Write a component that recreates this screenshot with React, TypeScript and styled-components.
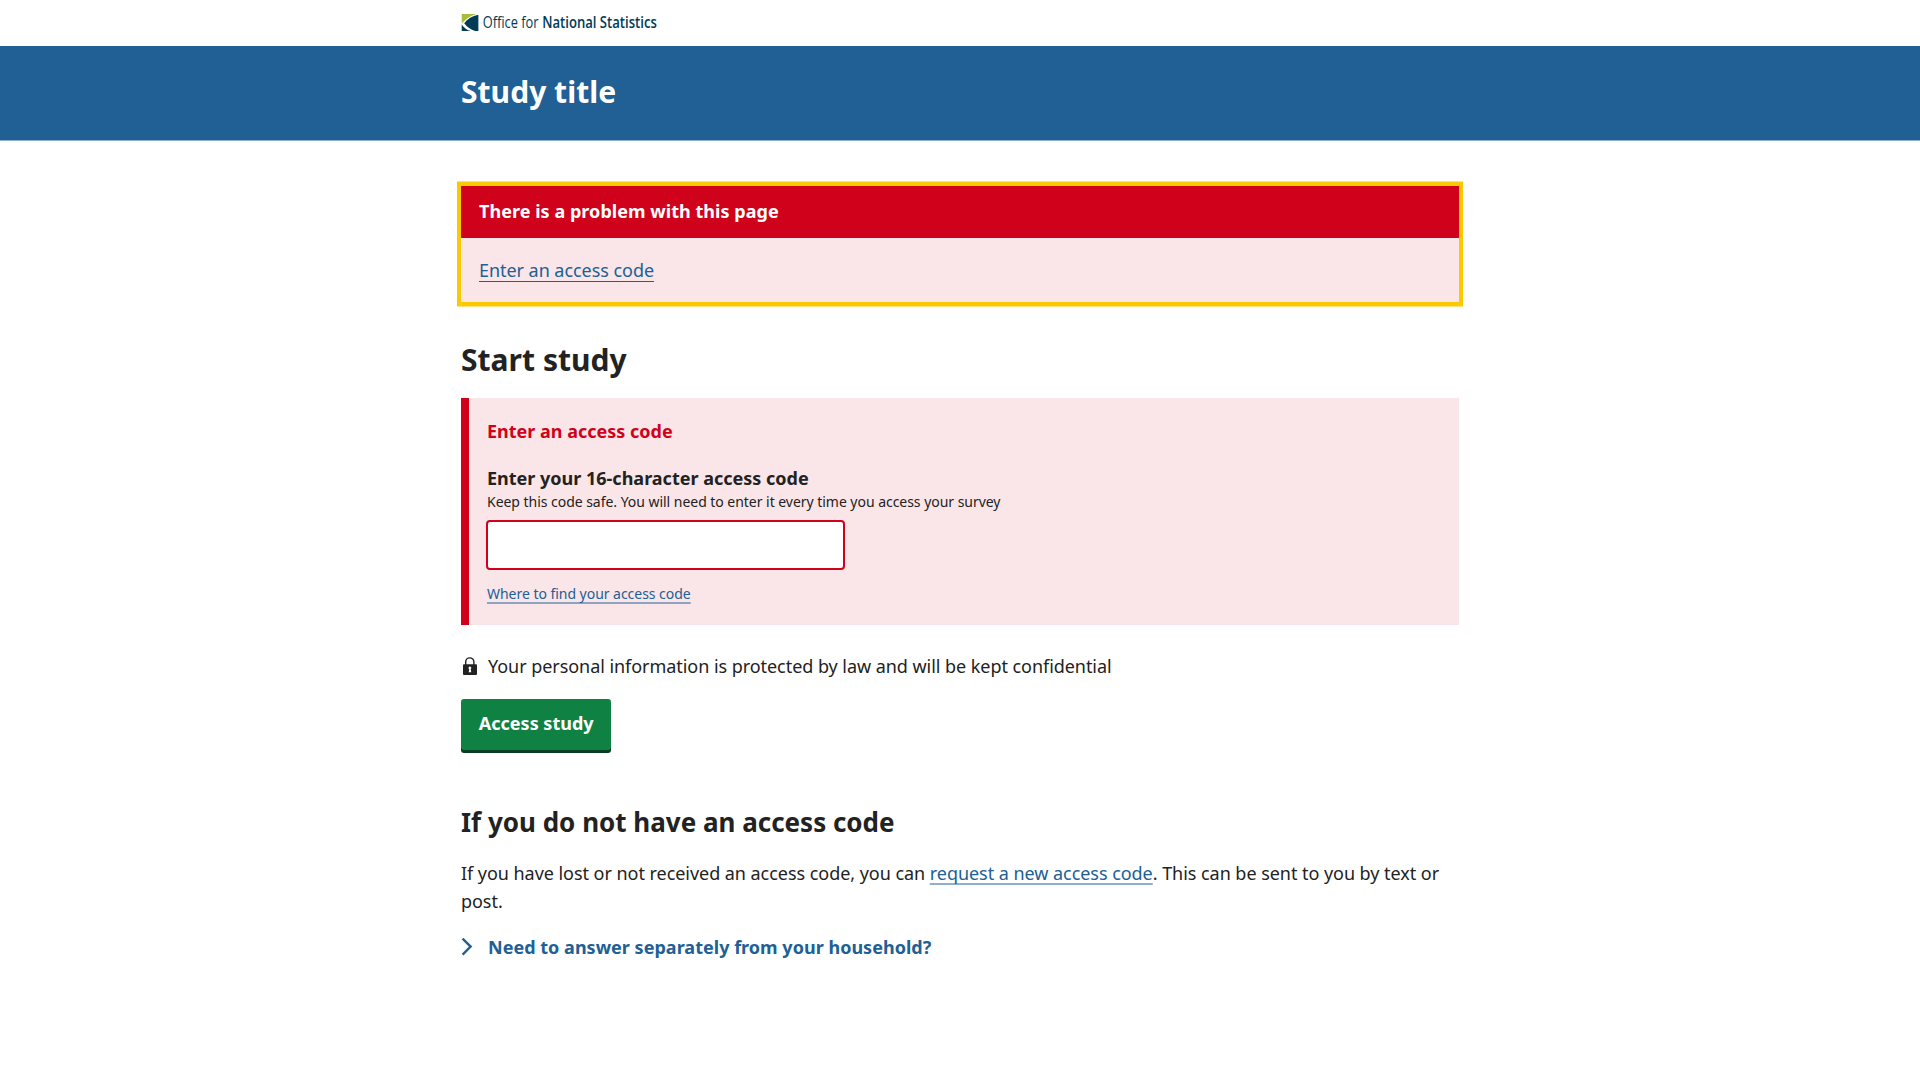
import React from "react";
import styled, { createGlobalStyle } from "styled-components";

const GlobalStyle = createGlobalStyle`
  *, *::before, *::after { box-sizing: border-box; }
  body {
    margin: 0;
    background: #fff;
    color: #222;
    font-family: "Noto Sans", "Open Sans", sans-serif;
    font-size: 18px;
    line-height: 28.8px;
  }
  h1, h2, p { margin: 0; }
`;

const Container = styled.div`
  width: 998px;
  margin: 0 auto 0 461px;
`;

const BrandBar = styled.header`
  height: 46px;
  padding-top: 8px;
`;

const Logo = styled.svg`
  display: block;
`;

const Masthead = styled.div`
  height: 94px;
  padding-top: 26.4px;
  background: #206095;
  box-shadow: 0 1px 0 rgba(32, 96, 149, 0.5);
`;

const Title = styled.h1<{ $light?: boolean }>`
  font-size: 30px;
  line-height: 39px;
  font-weight: 700;
  letter-spacing: 0.03px;
  color: ${(p) => (p.$light ? "#fff" : "#222")};
`;

const Summary = styled.section`
  margin-top: 46px;
  box-shadow:
    0 0 0 4px #fbc900,
    0 -1px 0 4px rgba(251, 201, 0, 0.5),
    0 1px 0 4px rgba(251, 201, 0, 0.5);
  background: #fae6e8;
`;

const SummaryHeader = styled.div`
  padding: 11.2px 18px 12px;
  background: #d0021b;
  color: #fff;
  font-weight: 700;
  letter-spacing: 0.04px;
`;

const SummaryBody = styled.div`
  padding: 18px 18px 17.2px;
  letter-spacing: -0.05px;
`;

const Link = styled.a<{ $soft?: boolean }>`
  color: #206095;
  text-decoration: underline;
  text-decoration-color: ${(p) => (p.$soft ? "rgba(32, 96, 149, 0.5)" : "#206095")};
  text-decoration-thickness: ${(p) => (p.$soft ? "2px" : "1px")};
  text-decoration-skip-ink: none;
  text-underline-offset: ${(p) => (p.$soft ? "3px" : "4px")};
`;

const Start = styled.div`
  margin-top: 37.6px;
`;

const ErrorPanel = styled.section`
  margin-top: 19.4px;
  height: 227px;
  padding: 19.3px 18px 18px;
  border-left: 8px solid #d0021b;
  background: #fae6e8;
`;

const ErrorText = styled.p`
  margin-bottom: 20px;
  color: #d0021b;
  font-weight: 700;
`;

const Label = styled.label`
  display: block;
  font-weight: 700;
  line-height: 25.2px;
`;

const Hint = styled.p`
  font-size: 14px;
  line-height: 22.4px;
  letter-spacing: -0.035px;
`;

const CodeInput = styled.input`
  display: block;
  width: 359px;
  height: 49.4px;
  margin: 6.7px 0 13.4px -1px;
  border: 2px solid #d0021b;
  border-radius: 4px;
  background: #fff;
`;

const Secure = styled.p`
  display: flex;
  align-items: center;
  margin-top: 26.7px;
  letter-spacing: -0.05px;
`;

const IconSlot = styled.span`
  display: flex;
  width: 27px;
  flex: none;
`;

const Button = styled.button`
  display: block;
  width: 150.4px;
  height: 51px;
  margin-top: 18.5px;
  padding: 0 0 2px;
  border: 0;
  border-radius: 3px;
  background: #0f8243;
  box-shadow: 0 3px 0 #073d20;
  color: #fff;
  font: 700 18px/28.8px "Noto Sans", sans-serif;
`;

const Subheading = styled.h2`
  margin-top: 55px;
  font-size: 26px;
  line-height: 34px;
  font-weight: 700;
`;

const Paragraph = styled.p`
  margin-top: 20.2px;
  line-height: 28px;
  letter-spacing: -0.045px;
`;

const Disclosure = styled.div`
  display: flex;
  align-items: center;
  margin-top: 17.8px;
  color: #206095;
  font-weight: 700;
  letter-spacing: 0.02px;
`;

const BrandLogo = () => (
  <Logo width="260" height="30" viewBox="0 -5 260 30" role="img" aria-label="Office for National Statistics">
    <path d="M0.7 0.9H15.4C9.6 2.6 4.6 5.8 0.7 10.6Z" fill="#a8bd3a" />
    <path d="M17.4 1.7V18H14.2C9.6 16.6 6.2 14 3.2 10.2C6.6 5.8 11 2.8 17.4 1.7Z" fill="#003c57" />
    <path d="M0.7 11.4C3 14.8 6 17 9.8 18H0.7Z" fill="#003c57" />
    <g fill="#003c57" fontFamily="Open Sans, Noto Sans, sans-serif" fontSize="16.6">
      <text x="21.8" y="14.8" textLength="55.6" lengthAdjust="spacingAndGlyphs">Office for</text>
      <text x="81.2" y="14.8" fontWeight="600" textLength="114.6" lengthAdjust="spacingAndGlyphs">National Statistics</text>
    </g>
  </Logo>
);

const Padlock = () => (
  <svg width="18" height="18" viewBox="0 0 18 18">
    <path d="M4.7 9V5a4.1 4.1 0 0 1 8.2 0V9" fill="none" stroke="#222" strokeWidth="1.4" />
    <rect x="2" y="7.2" width="14" height="10.8" rx="1" fill="#222" />
    <path d="M7.5 11a1.4 1.4 0 1 1 2.2 1.1l.5 3.2H7.7l.5-3.2a1.4 1.4 0 0 1-.7-1.1Z" fill="#fff" />
  </svg>
);

const Chevron = () => (
  <svg width="18" height="18" viewBox="0 0 18 18">
    <path d="M1.6 0.6L9.6 8.6L1.6 16.6" fill="none" stroke="#206095" strokeWidth="2.4" />
  </svg>
);

export default function App() {
  return (
    <>
      <GlobalStyle />
      <BrandBar>
        <Container><BrandLogo /></Container>
      </BrandBar>
      <Masthead>
        <Container><Title as="div" $light>Study title</Title></Container>
      </Masthead>
      <Container as="main">
        <Summary>
          <SummaryHeader>There is a problem with this page</SummaryHeader>
          <SummaryBody><Link>Enter an access code</Link></SummaryBody>
        </Summary>
        <Start>
          <Title>Start study</Title>
          <ErrorPanel>
            <ErrorText>Enter an access code</ErrorText>
            <Label htmlFor="code">Enter your 16-character access code</Label>
            <Hint>Keep this code safe. You will need to enter it every time you access your survey</Hint>
            <CodeInput id="code" />
            <Hint><Link $soft>Where to find your access code</Link></Hint>
          </ErrorPanel>
          <Secure>
            <IconSlot><Padlock /></IconSlot>
            Your personal information is protected by law and will be kept confidential
          </Secure>
          <Button>Access study</Button>
        </Start>
        <Subheading>If you do not have an access code</Subheading>
        <Paragraph>
          If you have lost or not received an access code, you can <Link $soft>request a new access code</Link>. This can be sent to you by text or post.
        </Paragraph>
        <Disclosure>
          <IconSlot><Chevron /></IconSlot>
          Need to answer separately from your household?
        </Disclosure>
      </Container>
    </>
  );
}
